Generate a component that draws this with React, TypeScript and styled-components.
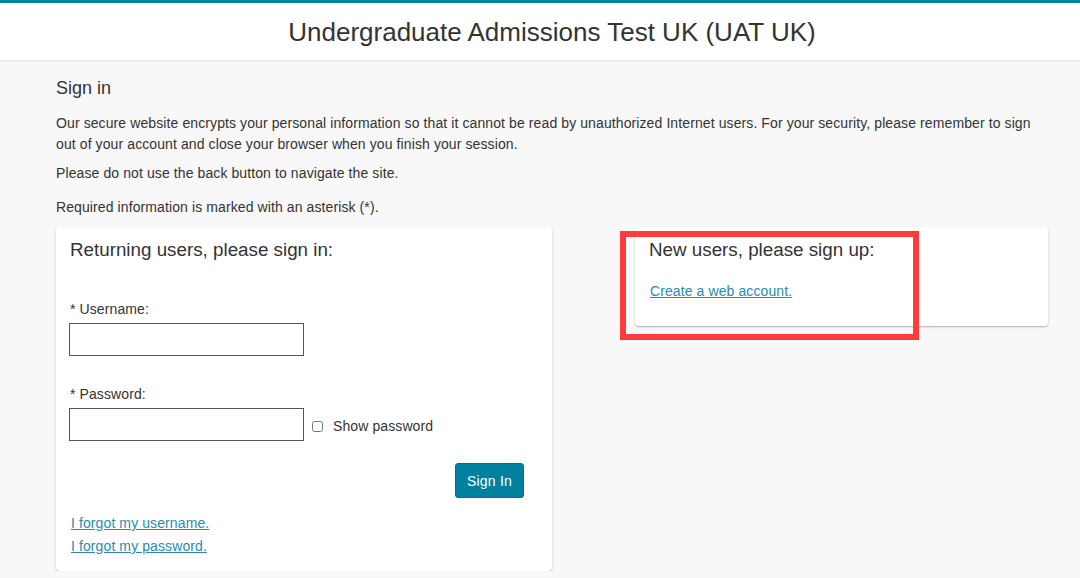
import { FC } from "react";
import styled, { createGlobalStyle } from "styled-components";

const GlobalStyle = createGlobalStyle`
  html, body {
    margin: 0;
    padding: 0;
    background: #f8f8f8;
  }
  body {
    font-family: "Liberation Sans", Arial, sans-serif;
    color: #333;
  }
`;

const Header = styled.header`
  background: #fff;
  border-top: 3px solid #00809f;
  border-bottom: 2px solid #ececec;
  height: 57px;
  display: flex;
  align-items: center;
  justify-content: center;
  padding-left: 24px;
`;

const Title = styled.h1`
  margin: 0;
  font-weight: 400;
  font-size: 26px;
  color: #333;
  padding-top: 2px;
`;

const Main = styled.main`
  width: 992px;
  margin: 0 0 0 56px;
  padding-top: 14px;
`;

const PageHeading = styled.h2`
  margin: 0 0 13px;
  font-size: 18px;
  font-weight: 400;
  line-height: 24px;
`;

const Text = styled.p<{ $gap?: number }>`
  margin: 0 0 ${(p) => p.$gap ?? 9}px;
  font-size: 14px;
  line-height: 21px;
  letter-spacing: 0.1px;
`;

const Columns = styled.div`
  display: grid;
  grid-template-columns: 496px 413px;
  justify-content: space-between;
  align-items: start;
  margin-top: 8px;
`;

const Card = styled.section<{ $bottom?: number }>`
  background: #fff;
  border-radius: 4px;
  box-shadow: 0 1px 2px rgba(0, 0, 0, 0.28);
  padding: 11px 14px ${(p) => p.$bottom ?? 16}px;
`;

const CardTitle = styled.h3`
  margin: 0;
  font-size: 18.8px;
  font-weight: 400;
  line-height: 24px;
`;

const Field = styled.div`
  display: flex;
  flex-direction: column;
  gap: 6px;
  margin-top: 30px;
  &:first-of-type {
    margin-top: 39px;
  }
`;

const Label = styled.label`
  font-size: 14px;
  line-height: 16px;
  letter-spacing: 0.1px;
`;

const InputRow = styled.div`
  display: flex;
  align-items: center;
  gap: 8px;
`;

const Input = styled.input`
  width: 235px;
  height: 33px;
  box-sizing: border-box;
  border: 1px solid #555;
  border-radius: 0;
  margin: 0 0 0 -1px;
  background: #fff;
`;

const CheckLabel = styled.label`
  display: flex;
  align-items: center;
  gap: 10px;
  font-size: 14px;
  letter-spacing: 0.1px;
  padding-top: 3px;
`;

const Check = styled.input`
  width: 11px;
  height: 11px;
  margin: 0;
  accent-color: #00809f;
`;

const Actions = styled.div`
  display: flex;
  justify-content: flex-end;
  margin-top: 22px;
  padding-right: 14px;
`;

const Button = styled.button`
  background: #00809f;
  color: #fff;
  border: 1px solid #00708c;
  border-radius: 3px;
  font-family: inherit;
  font-size: 14px;
  letter-spacing: 0.2px;
  width: 69px;
  height: 35px;
  cursor: pointer;
`;

const Links = styled.div<{ $top: number }>`
  display: flex;
  flex-direction: column;
  gap: 6px;
  margin-top: ${(p) => p.$top}px;
  padding-left: 1px;
`;

const Link = styled.a`
  color: #2a8cab;
  font-size: 14px;
  line-height: 17px;
  letter-spacing: 0.1px;
  text-decoration: underline;
`;

const SignUp = styled.div`
  position: relative;
`;

const Highlight = styled.div`
  position: absolute;
  left: -15px;
  top: 4px;
  width: 299px;
  height: 109px;
  box-sizing: border-box;
  border: 6px solid #ff3b3b;
  pointer-events: none;
`;

const App: FC = () => {
  return (
    <>
      <GlobalStyle />
      <Header>
        <Title>Undergraduate Admissions Test UK (UAT UK)</Title>
      </Header>
      <Main>
        <PageHeading>Sign in</PageHeading>
        <Text $gap={8}>
          Our secure website encrypts your personal information so that it cannot be read by unauthorized Internet
          users. For your security, please remember to sign out of your account and close your browser when you finish
          your session.
        </Text>
        <Text $gap={13}>Please do not use the back button to navigate the site.</Text>
        <Text>Required information is marked with an asterisk (*).</Text>
        <Columns>
          <Card>
            <CardTitle>Returning users, please sign in:</CardTitle>
            <Field>
              <Label htmlFor="user">* Username:</Label>
              <InputRow>
                <Input id="user" type="text" />
              </InputRow>
            </Field>
            <Field>
              <Label htmlFor="pass">* Password:</Label>
              <InputRow>
                <Input id="pass" type="password" />
                <CheckLabel>
                  <Check type="checkbox" />
                  Show password
                </CheckLabel>
              </InputRow>
            </Field>
            <Actions>
              <Button>Sign In</Button>
            </Actions>
            <Links $top={17}>
              <Link href="#">I forgot my username.</Link>
              <Link href="#">I forgot my password.</Link>
            </Links>
          </Card>
          <SignUp>
            <Card $bottom={26}>
              <CardTitle>New users, please sign up:</CardTitle>
              <Links $top={21}>
                <Link href="#">Create a web account.</Link>
              </Links>
            </Card>
            <Highlight />
          </SignUp>
        </Columns>
      </Main>
    </>
  );
};

export default App;
